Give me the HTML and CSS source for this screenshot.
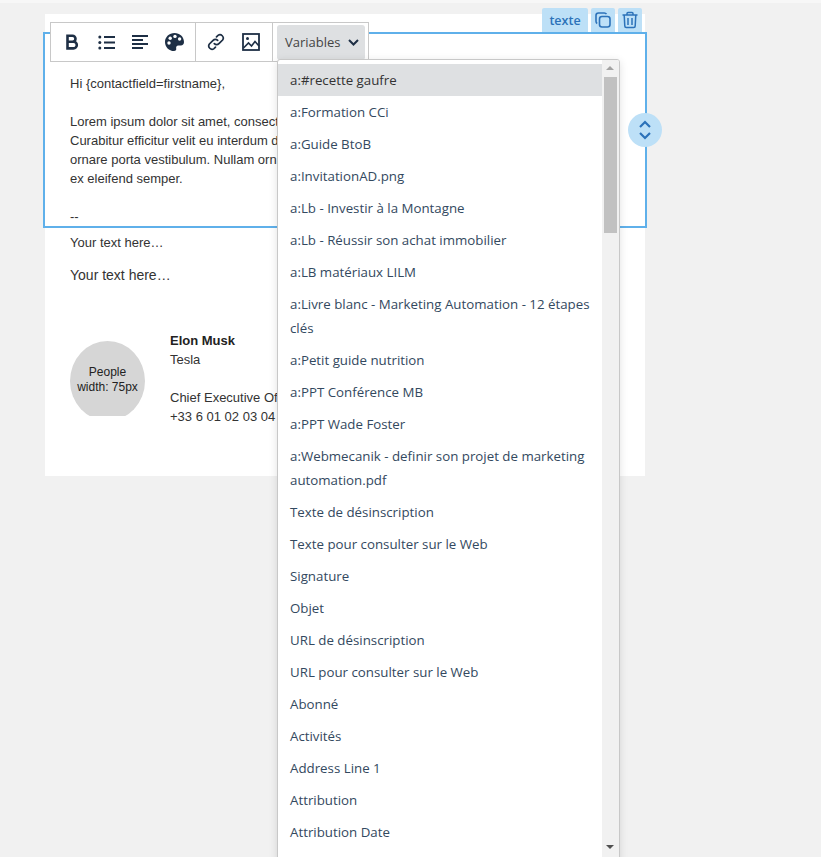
FILE: index.html
```html
<!DOCTYPE html>
<html lang="fr">
<head>
<meta charset="utf-8">
<title>Email editor</title>
<link rel="stylesheet" href="styles.css">
</head>
<body>
<div class="topline"></div>
<main class="canvas">
  <section class="block-selected">
    <div class="actions">
      <span class="action action-label">texte</span>
      <span class="action"><svg width="18" height="18" viewBox="0 0 18 18" fill="none" stroke="currentColor" stroke-width="1.6"><rect x="5.5" y="5.5" width="10.5" height="10.5" rx="2.5"/><path d="M12.5 3.2C12 2.4 11.2 2 10.3 2H4.5A2.5 2.5 0 0 0 2 4.5v5.8c0 .9.4 1.700 1.200 2.200"/></svg></span>
      <span class="action"><svg width="18" height="18" viewBox="0 0 18 18" fill="none" stroke="currentColor" stroke-width="1.500"><path d="M1.500 4h15M6 4V2.500c0-.6.400-1 1-1h4c.6 0 1 .4 1 1V4M3.200 4l.6 11c0 .9.700 1.500 1.500 1.500h7.400c.8 0 1.500-.6 1.500-1.500l.6-11M7 7v7M11 7v7"/></svg></span>
    </div>
    <div class="handle"><svg width="14" height="20" viewBox="0 0 14 20" fill="none" stroke="currentColor" stroke-width="2.200"><path d="M2 7l5-5 5 5M2 13l5 5 5-5"/></svg></div>
    <div class="toolbar">
      <div class="tool-group group-format">
        <span class="tool"><svg width="14" height="16" viewBox="0 0 14 16"><path fill="none" stroke="#1e2f45" stroke-width="2.600" d="M2.500 1.800h5a3 3 0 0 1 0 6h-5zM2.500 7.800h6a3.300 3.300 0 0 1 0 6.600h-6z"/></svg></span>
        <span class="tool"><svg width="17" height="15" viewBox="0 0 17 15" fill="#1e2f45"><circle cx="1.800" cy="2" r="1.500"/><circle cx="1.800" cy="7.500" r="1.500"/><circle cx="1.800" cy="13" r="1.500"/><rect x="6" y="1" width="11" height="2"/><rect x="6" y="6.500" width="11" height="2"/><rect x="6" y="12" width="11" height="2"/></svg></span>
        <span class="tool"><svg width="16" height="14" viewBox="0 0 16 14" fill="#1e2f45"><rect y="0" width="16" height="2"/><rect y="4" width="11" height="2"/><rect y="8" width="16" height="2"/><rect y="12" width="11" height="2"/></svg></span>
        <span class="tool"><svg width="19" height="18" viewBox="0 0 19 18"><path fill="#1e2f45" d="M9.500 0C4.300 0 0 3.900 0 8.900 0 13.800 4 18 9 18c1.800 0 2.500-1.200 2.200-2.500-.3-1.300.2-2.900 2.300-2.900h2.300c1.900 0 3.200-1.500 3.200-3.500C19 3.700 14.700 0 9.500 0z"/><circle cx="4" cy="10" r="1.700" fill="#fff"/><circle cx="5.200" cy="5.200" r="1.700" fill="#fff"/><circle cx="10" cy="3.400" r="1.700" fill="#fff"/><circle cx="14.600" cy="6" r="1.700" fill="#fff"/></svg></span>
      </div>
      <div class="tool-group group-insert">
        <span class="tool"><svg width="18" height="18" viewBox="0 0 18 18" fill="none" stroke="#1e2f45" stroke-width="1.700" stroke-linecap="round"><path d="M7.300 10.700a3.200 3.200 0 0 0 4.600 0l3.700-3.700a3.300 3.300 0 0 0-4.600-4.600L9.500 3.900"/><path d="M10.700 7.300a3.200 3.200 0 0 0-4.600 0l-3.700 3.700a3.300 3.300 0 0 0 4.600 4.600l1.500-1.500"/></svg></span>
        <span class="tool"><svg width="18" height="18" viewBox="0 0 18 18" fill="none" stroke="#1e2f45" stroke-width="1.800"><rect x="1" y="1" width="16" height="16"/><circle cx="5.500" cy="5.500" r="1.500" fill="#1e2f45" stroke="none"/><path d="M1.500 15l5-5 3 3 3.500-4.500 4 4.500" stroke-width="1.600"/></svg></span>
      </div>
      <div class="tool-group tool-group-last">
        <span class="variables">Variables <svg width="11" height="7" viewBox="0 0 11 7" fill="none" stroke="#1e2f45" stroke-width="2"><path d="M1 1l4.500 4.500L10 1"/></svg></span>
      </div>
    </div>
    <div class="dropdown">
      <ul class="menu">
        <li class="menu-item active">a:#recette gaufre</li>
        <li class="menu-item">a:Formation CCi</li>
        <li class="menu-item">a:Guide BtoB</li>
        <li class="menu-item">a:InvitationAD.png</li>
        <li class="menu-item">a:Lb - Investir à la Montagne</li>
        <li class="menu-item">a:Lb - Réussir son achat immobilier</li>
        <li class="menu-item">a:LB matériaux LILM</li>
        <li class="menu-item">a:Livre blanc - Marketing Automation - 12 étapes clés</li>
        <li class="menu-item">a:Petit guide nutrition</li>
        <li class="menu-item">a:PPT Conférence MB</li>
        <li class="menu-item">a:PPT Wade Foster</li>
        <li class="menu-item">a:Webmecanik - definir son projet de marketing automation.pdf</li>
        <li class="menu-item">Texte de désinscription</li>
        <li class="menu-item">Texte pour consulter sur le Web</li>
        <li class="menu-item">Signature</li>
        <li class="menu-item">Objet</li>
        <li class="menu-item">URL de désinscription</li>
        <li class="menu-item">URL pour consulter sur le Web</li>
        <li class="menu-item">Abonné</li>
        <li class="menu-item">Activités</li>
        <li class="menu-item">Address Line 1</li>
        <li class="menu-item">Attribution</li>
        <li class="menu-item">Attribution Date</li>
      </ul>
      <div class="scrollbar">
        <span class="arrow-up"></span>
        <span class="thumb"></span>
        <span class="arrow-down"></span>
      </div>
    </div>
    <div class="block-text">
      <p>Hi {contactfield=firstname},</p>
      <p>Lorem ipsum dolor sit amet, consect<br>Curabitur efficitur velit eu interdum d<br>ornare porta vestibulum. Nullam orn<br>ex eleifend semper.</p>
      <p>--</p>
    </div>
  </section>
  <p class="plain small">Your text here…</p>
  <p class="plain">Your text here…</p>
  <section class="signature">
    <div class="avatar">People<br>width: 75px</div>
    <div class="sig-text">
      <strong>Elon Musk</strong><br>Tesla<br><br>Chief Executive Of<br>+33 6 01 02 03 04
    </div>
  </section>
</main>
</body>
</html>
```
FILE: styles.css
```css
* { box-sizing: border-box; }
html, body { margin: 0; height: 857px; overflow: hidden; }
body { background: #f1f1f1; font-family: "Liberation Sans", Arial, sans-serif; color: #333; }
.topline { height: 3px; background: #f7f7f7; }
.canvas { width: 600px; height: 462px; margin: 11px 0 0 45px; background: #fff; position: relative; }
.block-selected { position: relative; width: 604px; height: 196px; margin-left: -2px; top: 18px; border: 2px solid #5fb0ea; }
.block-text { padding: 40px 0 0 25px; font-size: 13px; line-height: 19px; color: #333; height: 192px; white-space: nowrap; }
.block-text p { margin: 0 0 19px; }
.plain { margin: 0; padding-left: 25px; font-size: 14px; line-height: 20px; color: #333; }
.small { font-size: 13px; }
.block-selected + .plain { margin-top: 23px; }
.plain + .plain { margin-top: 12px; }
.signature { display: flex; gap: 25px; margin: 45px 0 0 25px; height: 100px; white-space: nowrap; }
.avatar { width: 75px; height: 75px; margin-top: 11px; background: #d6d6d6; font-size: 12px; line-height: 15px; text-align: center; padding-top: 24px; color: #222; clip-path: ellipse(37.5px 40px at 50% 40px); }
.sig-text { font-size: 13px; line-height: 19px; padding-top: 1px; }
.sig-text strong { color: #222; }
.actions { position: absolute; top: -26px; right: 3px; display: flex; gap: 3px; }
.action { height: 24px; width: 24px; background: #bde0f7; color: #2c72b9; display: flex; align-items: center; justify-content: center; border-radius: 2px 2px 0 0; font: 600 12.500px "Open Sans", sans-serif; }
.action-label { width: 46px; }
.handle { position: absolute; top: 79px; right: -17px; width: 34px; height: 34px; border-radius: 50%; background: #bde0f7; color: #2c72b9; display: flex; align-items: center; justify-content: center; }
.toolbar { position: absolute; left: 5px; top: -12px; height: 40px; width: 319px; background: #fff; border: 1px solid #c8c8c8; display: flex; z-index: 2; }
.tool-group { display: flex; align-items: center; border-right: 1px solid #c8c8c8; height: 38px; }
.group-format { padding: 0 10px; gap: 12px; }
.group-insert { padding: 0 10px 0 9px; gap: 13px; }
.tool { width: 22px; display: flex; justify-content: center; }
.tool-group-last { border-right: 0; padding: 0 4px; }
.variables { display: flex; align-items: center; gap: 7px; height: 35px; width: 88px; padding-left: 8px; background: #dee0e2; border-radius: 3px; font: 400 13px "Open Sans", sans-serif; color: #444; }
.dropdown { position: absolute; left: 232px; top: 25px; width: 343px; height: 810px; background: #fff; border: 1px solid #c8c8c8; border-radius: 3px; box-shadow: 0 2px 8px rgba(0,0,0,.12); z-index: 3; display: flex; overflow: hidden; }
.menu { list-style: none; margin: 0; padding: 4px 0; width: 325px; }
.menu-item { padding: 4px 8px 4px 12px; font: 400 13.300px/24px "Open Sans", sans-serif; color: #334960; }
.menu-item.active { background: #dee0e2; color: #333; }
.scrollbar { width: 17px; background: #f1f1f1; position: relative; }
.thumb { position: absolute; left: 2px; top: 17px; width: 13px; height: 156px; background: #c1c1c1; }
.arrow-up, .arrow-down { position: absolute; left: 4px; width: 0; height: 0; border-left: 4px solid transparent; border-right: 4px solid transparent; }
.arrow-up { top: 6px; border-bottom: 4px solid #a3a3a3; }
.arrow-down { top: 785px; border-top: 4px solid #505050; }
```
